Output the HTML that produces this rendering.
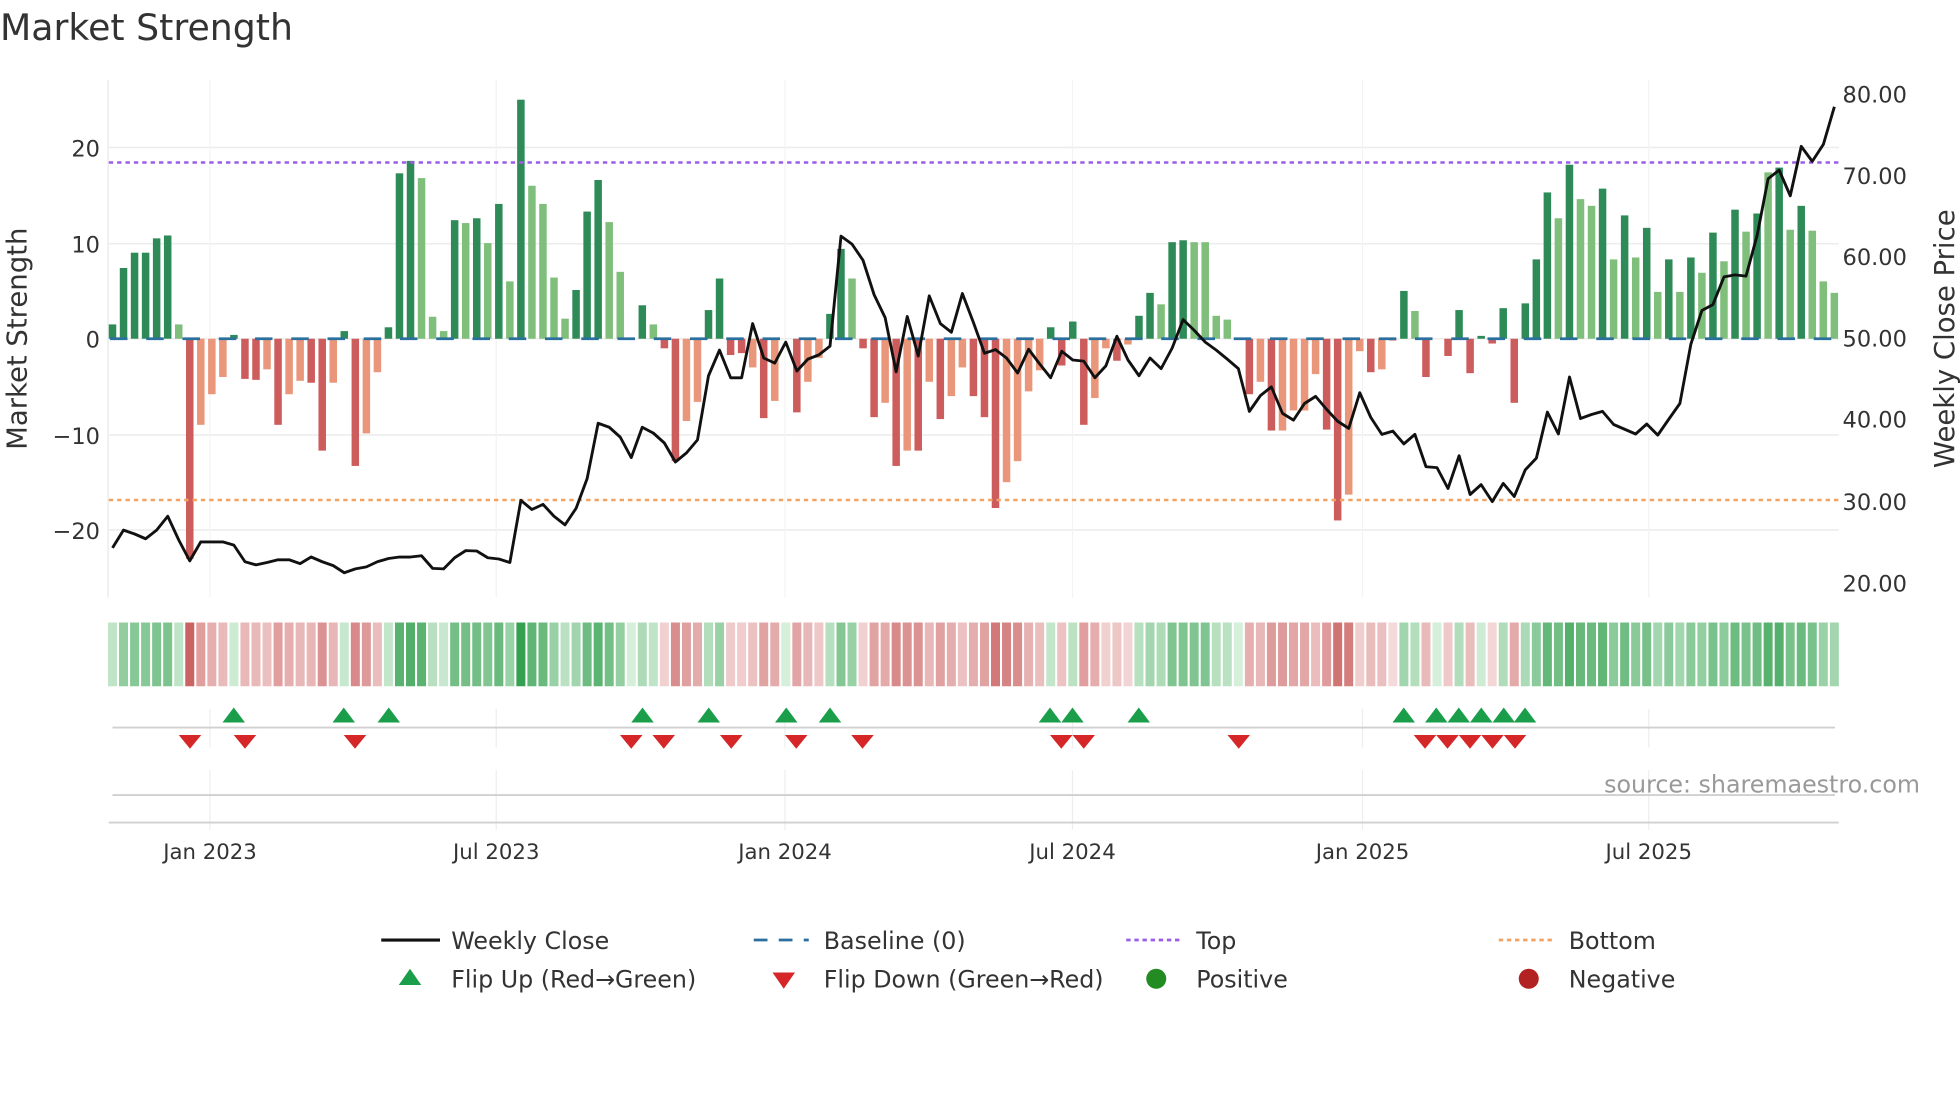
<!DOCTYPE html>
<html><head><meta charset="utf-8"><style>
html,body{margin:0;padding:0;background:#fff;}
svg{display:block;font-family:"DejaVu Sans","Liberation Sans",sans-serif;}
</style></head><body>
<svg id="c" width="1960" height="1102" viewBox="0 0 1568 881.6" preserveAspectRatio="none" xmlns="http://www.w3.org/2000/svg">
<text x="0" y="32" font-size="29" fill="#333">Market Strength</text>
<g id="grid"></g>
<g id="bars"></g>
<g id="over"></g>
<g font-size="18" fill="#333">
<text x="80" y="125" text-anchor="end">20</text>
<text x="80" y="202" text-anchor="end">10</text>
<text x="80" y="278" text-anchor="end">0</text>
<text x="80" y="355" text-anchor="end">−10</text>
<text x="80" y="431" text-anchor="end">−20</text>
<text x="1474" y="82">80.00</text>
<text x="1474" y="147">70.00</text>
<text x="1474" y="212">60.00</text>
<text x="1474" y="277">50.00</text>
<text x="1474" y="342">40.00</text>
<text x="1474" y="408">30.00</text>
<text x="1474" y="473">20.00</text>
</g>
<text transform="translate(21,271) rotate(-90)" text-anchor="middle" font-size="22" fill="#333">Market Strength</text>
<text transform="translate(1563,271) rotate(-90)" text-anchor="middle" font-size="22" fill="#333">Weekly Close Price</text>
<g font-size="17" fill="#333" text-anchor="middle">
<text x="168" y="687">Jan 2023</text>
<text x="397" y="687">Jul 2023</text>
<text x="628" y="687">Jan 2024</text>
<text x="858" y="687">Jul 2024</text>
<text x="1090" y="687">Jan 2025</text>
<text x="1319" y="687">Jul 2025</text>
</g>
<text x="1536" y="634" text-anchor="end" font-size="19" fill="#999">source: sharemaestro.com</text>
<g font-size="19" fill="#333">
<line x1="305" y1="752" x2="352" y2="752" stroke="#111" stroke-width="2.5"/>
<text x="361" y="759">Weekly Close</text>
<line x1="603" y1="752" x2="647" y2="752" stroke="#2a6f9e" stroke-width="2.2" stroke-dasharray="11 9"/>
<text x="659" y="759">Baseline (0)</text>
<line x1="901" y1="752" x2="945" y2="752" stroke="#9b5de5" stroke-width="2.2" stroke-dasharray="3.5 3"/>
<text x="957" y="759">Top</text>
<line x1="1199" y1="752" x2="1243" y2="752" stroke="#f4a261" stroke-width="2.2" stroke-dasharray="3.5 3"/>
<text x="1255" y="759">Bottom</text>
<polygon points="319,788 337,788 328,775" fill="#1a9e4a"/>
<text x="361" y="790">Flip Up (Red→Green)</text>
<polygon points="618,778 636,778 627,791" fill="#d62728"/>
<text x="659" y="790">Flip Down (Green→Red)</text>
<circle cx="925" cy="783" r="8" fill="#228b22"/>
<text x="957" y="790">Positive</text>
<circle cx="1223" cy="783" r="8" fill="#b22222"/>
<text x="1255" y="790">Negative</text>
</g>
</svg>
<script>
var NS="http://www.w3.org/2000/svg";
function el(p,t,a){var e=document.createElementNS(NS,t);for(var k in a)e.setAttribute(k,a[k]);p.appendChild(e);return e;}
var V=[[1.5,1],[7.4,1],[9,1],[9,1],[10.5,1],[10.8,1],[1.5,0],[-23,1],[-9,0],[-5.8,0],[-4,0],[0.4,1],[-4.2,1],[-4.3,1],[-3.2,0],[-9,1],[-5.8,0],[-4.4,0],[-4.6,1],[-11.7,1],[-4.6,0],[0.8,1],[-13.3,1],[-9.9,0],[-3.5,0],[1.2,1],[17.3,1],[18.6,1],[16.8,0],[2.3,0],[0.8,0],[12.4,1],[12.1,0],[12.6,1],[10,0],[14.1,1],[6,0],[25,1],[16,0],[14.1,0],[6.4,0],[2.1,0],[5.1,1],[13.3,1],[16.6,1],[12.2,0],[7,0],[0,0],[3.5,1],[1.5,0],[-1,1],[-12.8,1],[-8.6,0],[-6.6,0],[3,1],[6.3,1],[-1.7,1],[-1.5,1],[-3,0],[-8.3,1],[-6.5,0],[0,0],[-7.7,1],[-4.5,0],[-2,0],[2.6,1],[9.4,1],[6.3,0],[-1,1],[-8.2,1],[-6.7,0],[-13.3,1],[-11.7,0],[-11.7,1],[-4.5,0],[-8.4,1],[-6,0],[-3,0],[-6,1],
[-8.2,1],[-17.7,1],[-15,0],[-12.8,0],[-5.5,0],[-3.3,0],[1.2,1],[-2.8,1],[1.8,1],[-9,1],[-6.2,0],[-1,0],[-2.3,1],[-0.6,0],[2.4,1],[4.8,1],[3.6,0],[10.1,1],[10.3,1],[10.1,0],[10.1,0],[2.4,0],[2,0],[0,0],[-5.8,1],[-4.5,0],[-9.6,1],[-9.6,0],[-7.5,0],[-7.5,0],[-3.7,0],[-9.5,1],[-19,1],[-16.3,0],[-1.3,0],[-3.5,1],[-3.2,0],[-0.2,0],[5,1],[2.9,0],[-4,1],[0,0],[-1.8,1],[3,1],[-3.6,1],[0.3,1],[-0.5,1],[3.2,1],[-6.7,1],[3.7,1],[8.3,1],[15.3,1],[12.6,0],[18.2,1],[14.6,0],[13.9,0],[15.7,1],[8.3,0],[12.9,1],[8.5,0],[11.6,1],[4.9,0],[8.3,1],[4.9,0],[8.5,1],[6.9,0],[11.1,1],[8.1,0],[13.5,1],[11.2,0],[13.1,1],[17.4,0],[17.9,1],[11.4,0],[13.9,1],[11.3,0],[6,0],[4.8,0]];
var P=[1385,1340,1350,1362,1340,1305,1365,1418,1370,1370,1370,1378,1420,1428,1422,1415,1415,1425,1408,1420,1430,1448,1438,1433,1420,1412,1408,1408,1405,1437,1438,1410,1392,1393,1410,1413,1422,1265,1288,1275,1305,1327,1285,1210,1070,1080,1105,1157,1080,1095,1120,1168,1145,1112,950,885,955,955,818,905,918,865,938,908,897,875,597,617,658,745,803,940,800,900,748,818,840,742,815,
893,884,905,943,883,920,955,888,910,913,955,925,850,910,950,905,932,880,808,835,865,885,908,932,1040,1000,978,1045,1062,1020,1002,1035,1065,1083,993,1055,1098,1090,1122,1098,1180,1182,1235,1152,1250,1225,1268,1222,1255,1188,1158,1042,1097,953,1058,1048,1040,1073,1085,1097,1072,1100,1060,1020,870,785,770,700,695,698,595,452,430,495,370,408,365,270];
var svg=document.getElementById('c'),G=document.getElementById('grid'),B=document.getElementById('bars'),O=document.getElementById('over');
function X(i){return 90+i*8.83;}
var Y0=271,S=7.65;
[118,195,271,348,424].forEach(function(y){el(G,'line',{x1:87,x2:1471,y1:y,y2:y,stroke:'#ececec','stroke-width':1.2});});
el(G,'line',{x1:86.5,x2:86.5,y1:64,y2:478,stroke:'#ececec','stroke-width':1.2});
[168,397,628,858,1090,1319].forEach(function(x){
 el(G,'line',{x1:x,x2:x,y1:64,y2:478,stroke:'#f3f3f3','stroke-width':1});
 el(G,'line',{x1:x,x2:x,y1:567,y2:598,stroke:'#eeeeee','stroke-width':1});
 el(G,'line',{x1:x,x2:x,y1:616,y2:664,stroke:'#eeeeee','stroke-width':1});
});
el(G,'line',{x1:90,x2:1468,y1:582,y2:582,stroke:'#d0d0d0','stroke-width':1.5});
el(G,'line',{x1:90,x2:1468,y1:636,y2:636,stroke:'#d0d0d0','stroke-width':1.5});
el(G,'line',{x1:87,x2:1471,y1:658,y2:658,stroke:'#d0d0d0','stroke-width':1.5});
function mix(a,b,t){var r='#';for(var k=0;k<3;k++){var v=Math.round(a[k]+(b[k]-a[k])*t);r+=('0'+v.toString(16)).slice(-2);}return r;}
V.forEach(function(d,i){
 var v=d[0],x=X(i);
 if(v!==0){var c=v>0?(d[1]?'#2e8b57':'#7fbf7b'):(d[1]?'#cd5c5c':'#e9967a');
  var h=Math.abs(v)*S;el(B,'rect',{x:x-3,y:v>0?Y0-h:Y0,width:6,height:h,fill:c});}
 var t=Math.min(1,Math.pow(Math.abs(v)/25,0.7));
 var col=v>=0?mix([214,239,218],[52,160,80],t):mix([246,222,222],[200,92,92],t);
 el(B,'rect',{x:x-3.6,y:498,width:7.2,height:51,fill:col});
});
el(O,'line',{x1:87,x2:1471,y1:130,y2:130,stroke:'#9b5de5','stroke-width':2,'stroke-dasharray':'3.5 3.2'});
el(O,'line',{x1:87,x2:1471,y1:400,y2:400,stroke:'#f4a261','stroke-width':2,'stroke-dasharray':'3.5 3.2'});
el(O,'line',{x1:88,x2:1471,y1:271,y2:271,stroke:'#2a6f9e','stroke-width':2.2,'stroke-dasharray':'14 15'});
var pts=P.map(function(z,i){return X(i).toFixed(1)+','+(z/3.16).toFixed(1);}).join(' ');
el(O,'polyline',{points:pts,fill:'none',stroke:'#111','stroke-width':2.3,'stroke-linejoin':'round'});
[187,275,311,514,567,629,664,840,858,911,1123,1149,1167,1185,1203,1220].forEach(function(x){
 el(O,'polygon',{points:(x-9)+',578 '+(x+9)+',578 '+x+',566',fill:'#1a9e4a'});});
[152,196,284,505,531,585,637,690,849,867,991,1140,1158,1176,1194,1212].forEach(function(x){
 el(O,'polygon',{points:(x-9)+',588 '+(x+9)+',588 '+x+',599',fill:'#d62728'});});
</script>
</body></html>
